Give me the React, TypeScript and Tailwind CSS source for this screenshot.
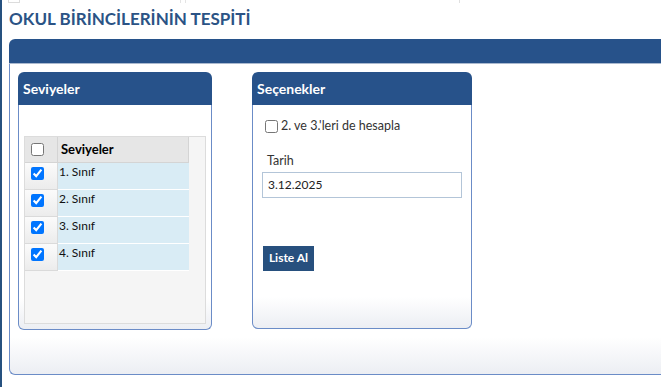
import React from "react";

const rows = ["1. Sınıf", "2. Sınıf", "3. Sınıf", "4. Sınıf"];

function Panel({
  title,
  width,
  height,
  children,
}: {
  title: string;
  width: string;
  height: string;
  children: React.ReactNode;
}) {
  return (
    <div className={`flex flex-col ${width} ${height}`}>
      <div className="h-[33px] shrink-0 rounded-t-[6px] bg-[#27528a] pl-[5px] flex items-center text-white font-bold text-[14px]">
        {title}
      </div>
      <div className="flex-1 rounded-b-[6px] border-x border-b border-[#6b8cc7] bg-[linear-gradient(to_bottom,#ffffff_0%,#ffffff_86%,#eceef3_100%)]">
        {children}
      </div>
    </div>
  );
}

export default function App() {
  return (
    <div className="w-[661px] h-[387px] overflow-hidden bg-white border-l-2 border-[#26517f] font-['Lato',sans-serif]">
      {/* cut-off bits at the very top */}
      <div className="h-[3px] flex">
        <div className="ml-[6px] w-[12px] h-[3px] border border-t-0 border-[#dcdcdc]" />
        <div className="ml-[160px] w-[6px] h-[3px] border-x border-[#e4e4e4]" />
        <div className="ml-[273px] w-[1px] h-[3px] bg-[#e0e0e0]" />
      </div>

      <h1 className="h-[28px] pl-[7px] pt-[4px] text-[17px] leading-[24px] font-bold text-[#2b5385]">
        OKUL BİRİNCİLERİNİN TESPİTİ
      </h1>

      <div className="ml-[7px] mt-[8px] w-[700px]">
        <div className="h-[25px] rounded-tl-[6px] bg-[#27528a] border-b border-[#aab9cf]" />
        <div className="h-[311px] rounded-bl-[6px] border-l border-b border-[#6b8cc7] bg-[linear-gradient(to_bottom,#ffffff_0%,#ffffff_88%,#eceef3_100%)] pl-[8px] pt-[8px] flex gap-[40px]">
          <Panel title="Seviyeler" width="w-[194px]" height="h-[258px]">
            <div className="ml-[5px] mt-[31px] w-[182px] h-[188px] border border-[#dcdcdc] bg-[#f5f5f5]">
              <div className="flex h-[26px] w-[164px]">
                <div className="w-[33px] bg-[#e6e6e6] border-r border-b border-[#d4d4d4] flex items-center pl-[6px]">
                  <input type="checkbox" className="m-0 w-[13px] h-[13px]" readOnly />
                </div>
                <div className="flex-1 bg-[#e6e6e6] border-r border-b border-[#d4d4d4] pl-[3px] flex items-center text-[13px] font-bold text-black">
                  Seviyeler
                </div>
              </div>
              {rows.map((r) => (
                <div key={r} className="flex h-[27px] w-[164px]">
                  <div className="w-[33px] bg-[linear-gradient(to_bottom,#fbfbfb,#ececec)] border-r border-b border-[#dadada] pl-[6px] pt-[4px]">
                    <input type="checkbox" className="m-0 w-[13px] h-[13px] block" checked readOnly />
                  </div>
                  <div className="flex-1 bg-[#d9ecf5] border-b border-white pl-[1px] pt-[1px] text-[12px] leading-[16px] text-[#111]">
                    {r}
                  </div>
                </div>
              ))}
            </div>
          </Panel>

          <Panel title="Seçenekler" width="w-[220px]" height="h-[257px]">
            <div className="pl-[12px] pt-[12px] flex items-center gap-[3px] text-[12.5px] text-[#333]">
              <input type="checkbox" className="m-0 w-[13px] h-[13px]" readOnly />
              <span>2. ve 3.'leri de hesapla</span>
            </div>
            <div className="pl-[14px] mt-[17px] text-[12.5px] leading-[16px] text-[#333]">Tarih</div>
            <div className="ml-[9px] mt-[3px] w-[200px] h-[26px] border border-[#b3c5d8] pl-[5px] flex items-center text-[12px] text-[#222]">
              3.12.2025
            </div>
            <button className="ml-[10px] mt-[48px] w-[51px] h-[25px] bg-[#27507e] text-white font-bold text-[12px]">
              Liste Al
            </button>
          </Panel>
        </div>
      </div>
    </div>
  );
}
